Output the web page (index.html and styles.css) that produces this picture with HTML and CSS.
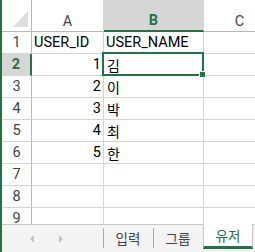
FILE: index.html
```html
<!DOCTYPE html>
<html lang="ko">
<head>
    <meta charset="UTF-8">
    <meta name="viewport" content="width=device-width, initial-scale=1.0">
    <title>Sheet</title>
    <link rel="stylesheet" href="styles.css">
</head>
<body>
    <div class="app">
        <div class="edge"></div>
        <div class="main">
            <div class="sheet">
                <div class="corner">
                    <svg width="30" height="32" viewBox="0 0 30 32">
                        <polygon points="11,27 26,27 26,11" fill="#dcdcdc"/>
                    </svg>
                </div>
                <div class="col-head">A</div>
                <div class="col-head active">B</div>
                <div class="col-head">C</div>

                <div class="row-head">1</div>
                <div class="cell">USER_ID</div>
                <div class="cell">USER_NAME</div>
                <div class="cell"></div>

                <div class="row-head active">2</div>
                <div class="cell num">1</div>
                <div class="cell kr selected">김<span class="handle"></span></div>
                <div class="cell"></div>

                <div class="row-head">3</div>
                <div class="cell num">2</div>
                <div class="cell kr">이</div>
                <div class="cell"></div>

                <div class="row-head">4</div>
                <div class="cell num">3</div>
                <div class="cell kr">박</div>
                <div class="cell"></div>

                <div class="row-head">5</div>
                <div class="cell num">4</div>
                <div class="cell kr">최</div>
                <div class="cell"></div>

                <div class="row-head">6</div>
                <div class="cell num">5</div>
                <div class="cell kr">한</div>
                <div class="cell"></div>

                <div class="row-head">7</div>
                <div class="cell"></div>
                <div class="cell"></div>
                <div class="cell"></div>

                <div class="row-head">8</div>
                <div class="cell"></div>
                <div class="cell"></div>
                <div class="cell"></div>

                <div class="row-head">9</div>
                <div class="cell"></div>
                <div class="cell"></div>
                <div class="cell"></div>
            </div>

            <div class="tabbar">
                <div class="nav">
                    <span class="arrow left"></span>
                    <span class="arrow right"></span>
                </div>
                <div class="tab">입력</div>
                <div class="tab">그룹</div>
                <div class="tab current">유저</div>
            </div>
        </div>
    </div>
</body>
</html>
```

FILE: styles.css
```css
body {
    margin: 0;
    padding: 0;
    background-color: white;
    font-family: 'Roboto', 'Noto Sans CJK KR', sans-serif;
    font-size: 14.5px;
    color: #000;
}

.app {
    display: flex;
    width: 255px;
    height: 252px;
    overflow: hidden;
}

.edge {
    width: 2px;
    flex: none;
    background-color: #217346;
}

.main {
    flex: 1;
    display: flex;
    flex-direction: column;
    min-width: 0;
}

.sheet {
    flex: 1;
    display: grid;
    grid-template-columns: 30px 72px 100px 72px;
    grid-template-rows: 32px;
    grid-auto-rows: 22px;
    overflow: hidden;
}

.sheet > div {
    box-sizing: border-box;
    border-right: 1px solid #d4d4d4;
    border-bottom: 1px solid #d4d4d4;
}

.corner {
    border-right-color: #b8b8b8 !important;
    border-bottom-color: #b8b8b8 !important;
}

.corner svg {
    display: block;
}

.col-head {
    display: flex;
    justify-content: center;
    align-items: center;
    padding-top: 11px;
    color: #444;
    border-bottom-color: #b8b8b8 !important;
}

.col-head.active {
    background-color: #d6d6d6;
    color: #217346;
    font-weight: bold;
    border-bottom: 2px solid #217346 !important;
}

.row-head {
    display: flex;
    justify-content: center;
    align-items: center;
    color: #444;
    border-right-color: #b8b8b8 !important;
}

.row-head.active {
    background-color: #d6d6d6;
    color: #217346;
    font-weight: bold;
    border-right: 2px solid #217346 !important;
}

.cell {
    display: flex;
    align-items: center;
    padding: 0 2px;
    white-space: nowrap;
}

.cell.num {
    justify-content: flex-end;
}

.cell.kr {
    font-family: 'Noto Sans CJK KR', sans-serif;
    font-size: 14px;
    padding-left: 3px;
}

.cell.selected {
    position: relative;
}

.cell.selected::before {
    content: "";
    position: absolute;
    top: -2px;
    left: -2px;
    width: 102px;
    height: 24px;
    box-sizing: border-box;
    border: 2px solid #217346;
}

.handle {
    position: absolute;
    right: -3px;
    bottom: -3px;
    width: 5px;
    height: 5px;
    background-color: #217346;
    border: 1px solid white;
}

.tabbar {
    height: 28px;
    flex: none;
    box-sizing: border-box;
    display: flex;
    background-color: #f3f3f3;
    border-top: 1px solid #c6c6c6;
    font-family: 'Noto Sans CJK KR', sans-serif;
    font-size: 13.5px;
}

.nav {
    width: 101px;
    flex: none;
    display: flex;
    align-items: center;
    padding-left: 28px;
    gap: 25px;
    box-sizing: border-box;
}

.arrow {
    width: 0;
    height: 0;
    border-top: 4px solid transparent;
    border-bottom: 4px solid transparent;
}

.arrow.left {
    border-right: 4px solid #c4c4c4;
}

.arrow.right {
    border-left: 4px solid #c4c4c4;
}

.tab {
    width: 50px;
    flex: none;
    box-sizing: border-box;
    display: flex;
    justify-content: center;
    align-items: center;
    color: #444;
    position: relative;
    padding-bottom: 2px;
}

.tab::before {
    content: "";
    position: absolute;
    left: 0;
    top: 3px;
    bottom: 4px;
    width: 1px;
    background-color: #ababab;
}

.tab.current {
    background-color: white;
    color: #217346;
    margin-top: -1px;
    border-left: 1px solid #c6c6c6;
    border-right: 1px solid #c6c6c6;
    border-bottom: 3px solid #217346;
    margin-bottom: 3px;
    padding-bottom: 0;
}

.tab.current::before {
    display: none;
}
```
